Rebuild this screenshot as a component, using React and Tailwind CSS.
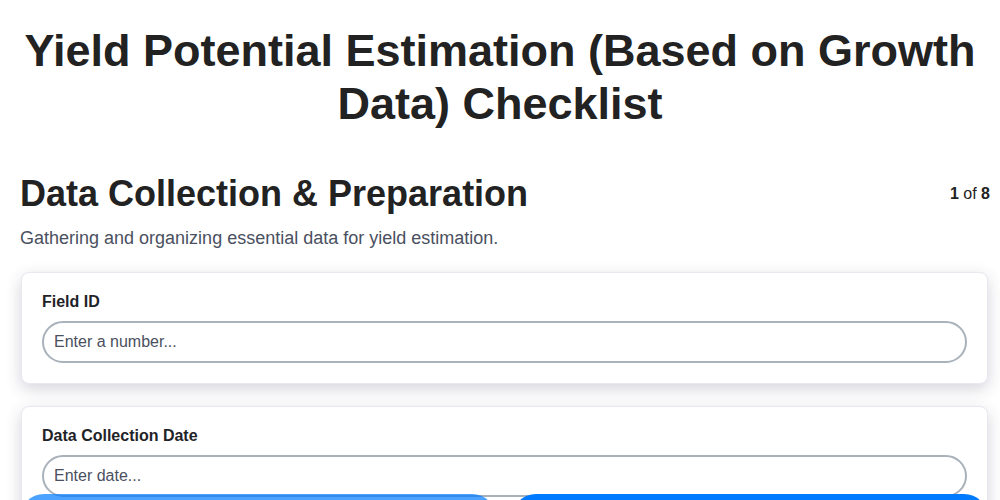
import React, { useState } from 'react';

const fields = [
  { id: 'field-id', label: 'Field ID', placeholder: 'Enter a number...' },
  { id: 'collection-date', label: 'Data Collection Date', placeholder: 'Enter date...' },
];

const App = () => {
  const [values, setValues] = useState({});
  const step = 1;
  const total = 8;

  return (
    <div className="min-h-screen bg-white text-[#222] font-['Liberation_Sans',Arial,sans-serif]">
      <h1 className="pt-6 px-5 text-center text-[45px] leading-[53px] font-bold">
        Yield Potential Estimation (Based on Growth Data) Checklist
      </h1>

      <div className="mt-[42px] pl-5 pr-[10px] flex items-center justify-between">
        <h2 className="text-[36px] leading-[43px] font-bold">Data Collection &amp; Preparation</h2>
        <div className="text-base">
          <span className="font-bold">{step}</span> of <span className="font-bold">{total}</span>
        </div>
      </div>
      <p className="mt-[11px] pl-5 text-lg leading-6 text-[#4a5060]">
        Gathering and organizing essential data for yield estimation.
      </p>

      <div className="mt-[22px] pl-[21px] pr-[12px] pb-24 flex flex-col gap-[22px]">
        {fields.map(f => (
          <div key={f.id} className="bg-white border border-[#e8e8ee] rounded-lg shadow-[0_5px_16px_rgba(40,40,80,0.2)] px-5 pt-[19px] pb-5">
            <label htmlFor={f.id} className="block text-base leading-5 font-bold text-[#1f2328]">{f.label}</label>
            <input
              id={f.id}
              type="text"
              value={values[f.id] || ''}
              onChange={e => setValues({ ...values, [f.id]: e.target.value })}
              placeholder={f.placeholder}
              className="mt-[9px] w-full h-[42px] px-[10px] rounded-full border-2 border-[#a9b1bb] text-base text-[#222] placeholder:text-[#4a5060] outline-none"
            />
          </div>
        ))}
      </div>

      {/* NAV */}
      <div className="fixed left-0 right-0 top-[494px] px-5 pr-3 flex gap-4">
        <button disabled className="flex-1 h-12 rounded-full bg-[#007bff] opacity-70 text-white font-bold">Previous</button>
        <button className="flex-1 h-12 rounded-full bg-[#007bff] text-white font-bold">Next</button>
      </div>
    </div>
  );
};

export default App;
